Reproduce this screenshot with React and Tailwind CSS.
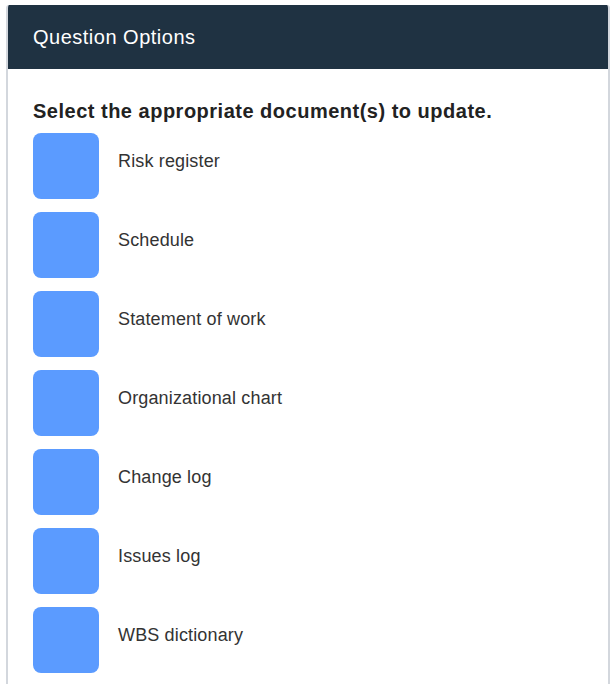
const options = [
  "Risk register",
  "Schedule",
  "Statement of work",
  "Organizational chart",
  "Change log",
  "Issues log",
  "WBS dictionary",
];

const App = () => {
  return (
    <div className="h-[684px] w-[616px] bg-white pl-[6px] pr-[6px] pt-[5px] font-['Liberation_Sans',Arial,sans-serif]">
      <div className="h-full border-x-2 border-[#d3d7dd] rounded-t-[3px] overflow-hidden">
        <div className="flex h-[64px] items-center bg-[#1f3242] px-[25px] text-[20px] tracking-[0.5px] text-white">
          Question Options
        </div>
        <div className="px-[25px] pt-[29px]">
          <h4 className="mb-[9px] text-[20px] font-bold leading-[26px] tracking-[0.5px] text-[#222]">
            Select the appropriate document(s) to update.
          </h4>
          <div className="flex flex-col gap-[13px]">
            {options.map((label) => (
              <label key={label} className="flex items-center gap-[19px]">
                <span className="h-[66px] w-[66px] shrink-0 rounded-[8px] bg-[#5b9bff]" />
                <span className="pb-[9px] text-[18px] tracking-[0.15px] text-[#333]">{label}</span>
              </label>
            ))}
          </div>
        </div>
      </div>
    </div>
  );
};

export default App;
